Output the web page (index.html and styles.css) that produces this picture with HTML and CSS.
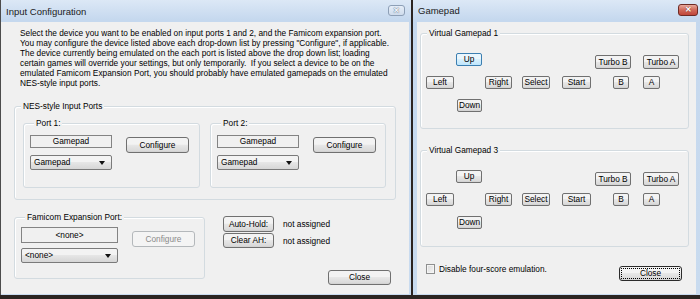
FILE: index.html
```
<!DOCTYPE html>
<html lang="en">
<head>
  <meta charset="UTF-8" />
  <title>Input Configuration</title>
  <link rel="stylesheet" href="styles.css">
</head>
<body>
  <div class="window input-config">
    <div class="titlebar">
      <span class="title">Input Configuration</span>
      <span class="close-btn inactive">&#x2715;</span>
    </div>
    <div class="client config-client">
      <p class="intro">
        Select the device you want to be enabled on input ports 1 and 2, and the Famicom expansion port.<br>
        You may configure the device listed above each drop-down list by pressing "Configure", if applicable.<br>
        The device currently being emulated on the each port is listed above the drop down list; loading<br>
        certain games will override your settings, but only temporarily.&nbsp; If you select a device to be on the<br>
        emulated Famicom Expansion Port, you should probably have emulated gamepads on the emulated<br>
        NES-style input ports.
      </p>

      <div class="group nes-group">
        <span class="group-label">NES-style Input Ports</span>
        <div class="ports">
          <div class="group port port-1">
            <span class="group-label">Port 1:</span>
            <div class="port-body">
              <div class="port-fields">
                <div class="static">Gamepad</div>
                <div class="combo">Gamepad<span class="arrow"></span></div>
              </div>
              <button class="btn configure">Configure</button>
            </div>
          </div>
          <div class="group port port-2">
            <span class="group-label">Port 2:</span>
            <div class="port-body">
              <div class="port-fields">
                <div class="static">Gamepad</div>
                <div class="combo">Gamepad<span class="arrow"></span></div>
              </div>
              <button class="btn configure">Configure</button>
            </div>
          </div>
        </div>
      </div>

      <div class="bottom-row">
        <div class="group fam-group">
          <span class="group-label">Famicom Expansion Port:</span>
          <div class="port-body">
            <div class="port-fields">
              <div class="static wide">&lt;none&gt;</div>
              <div class="combo wide">&lt;none&gt;<span class="arrow"></span></div>
            </div>
            <button class="btn configure" disabled>Configure</button>
          </div>
        </div>
        <div class="hotkeys">
          <div class="hotkey">
            <button class="btn hotkey-btn">Auto-Hold:</button>
            <span class="hotkey-value">not assigned</span>
          </div>
          <div class="hotkey">
            <button class="btn hotkey-btn">Clear AH:</button>
            <span class="hotkey-value">not assigned</span>
          </div>
          <button class="btn close">Close</button>
        </div>
      </div>
    </div>
  </div>

  <div class="window gamepad">
    <div class="titlebar">
      <span class="title">Gamepad</span>
      <span class="close-btn active">&#x2715;</span>
    </div>
    <div class="client pad-client">
      <div class="group pad-group">
        <span class="group-label">Virtual Gamepad 1</span>
        <div class="pad-row row-top">
          <button class="btn pad up focused">Up</button>
          <button class="btn pad turbo-b">Turbo B</button>
          <button class="btn pad turbo-a">Turbo A</button>
        </div>
        <div class="pad-row row-mid">
          <button class="btn pad left">Left</button>
          <button class="btn pad right">Right</button>
          <button class="btn pad select">Select</button>
          <button class="btn pad start">Start</button>
          <button class="btn pad b">B</button>
          <button class="btn pad a">A</button>
        </div>
        <div class="pad-row row-bottom">
          <button class="btn pad down">Down</button>
        </div>
      </div>

      <div class="group pad-group second">
        <span class="group-label">Virtual Gamepad 3</span>
        <div class="pad-row row-top">
          <button class="btn pad up">Up</button>
          <button class="btn pad turbo-b">Turbo B</button>
          <button class="btn pad turbo-a">Turbo A</button>
        </div>
        <div class="pad-row row-mid">
          <button class="btn pad left">Left</button>
          <button class="btn pad right">Right</button>
          <button class="btn pad select">Select</button>
          <button class="btn pad start">Start</button>
          <button class="btn pad b">B</button>
          <button class="btn pad a">A</button>
        </div>
        <div class="pad-row row-bottom">
          <button class="btn pad down">Down</button>
        </div>
      </div>

      <div class="pad-footer">
        <label class="check"><span class="checkbox"></span>Disable four-score emulation.</label>
        <button class="btn close default">Close</button>
      </div>
    </div>
  </div>
</body>
</html>
```

FILE: styles.css
```
* {
  box-sizing: border-box;
}

body {
  margin: 0;
  height: 299px;
  overflow: hidden;
  background-color: #2b2421;
  font-family: "Liberation Sans", Arial, sans-serif;
  font-size: 8.3px;
  color: #000;
  display: flex;
  gap: 2px;
  align-items: flex-start;
}

.window {
  height: 295px;
  display: flex;
  flex-direction: column;
  background: linear-gradient(#dce8f6, #c5d8ee 20px, #c9dbef);
}

.input-config {
  width: 411px;
  border-left: 1px solid #4c4c4c;
  padding: 0 2px 1px 0;
}

.gamepad {
  width: 287px;
}

.titlebar {
  height: 22px;
  flex: none;
  display: flex;
  justify-content: space-between;
  align-items: flex-start;
  padding: 4px 2px 0 5px;
}

.input-config .titlebar {
  padding: 5px 4px 0 5px;
}

.title {
  margin-top: 1px;
  font-size: 9.5px;
  line-height: 12px;
  color: #1b1b1b;
}

.close-btn {
  width: 20px;
  height: 12px;
  border-radius: 3px;
  font-size: 8px;
  line-height: 10px;
  text-align: center;
  font-weight: bold;
}

.close-btn.inactive {
  width: 17px;
  height: 11px;
  line-height: 9px;
  border: 1px solid #8d9fb6;
  background: linear-gradient(#e6eef8, #cfdcec);
  color: #f4f7fb;
  text-shadow: 0 0 1px #60708a, 0 0 1px #60708a;
}

.close-btn.active {
  border: 1px solid #6e2b25;
  background: linear-gradient(#e9a99c, #d0695a 50%, #c0463a);
  color: #fff;
  text-shadow: 0 0 1px #5a1a14;
}

.client {
  flex: 1;
  background-color: #f0f0f0;
}

.config-client {
  padding: 6px 0 0 13px;
}

.intro {
  margin: 0 0 0 6px;
  line-height: 10px;
  white-space: nowrap;
}

/* group boxes */
.group {
  border: 1px solid #d3dbe0;
  border-radius: 3px;
  box-shadow: inset 1px 1px 0 #fff;
}

.group-label {
  display: block;
  width: max-content;
  margin: -6px 0 0 5px;
  padding: 0 2px;
  line-height: 10px;
  background-color: #f0f0f0;
}

.nes-group {
  width: 382px;
  height: 94px;
  margin-top: 18px;
  padding: 0 8px;
}

.nes-group > .group-label {
  margin-left: -2px;
}

.ports {
  display: flex;
  gap: 10px;
  margin-top: 12px;
}

.port {
  height: 65px;
  padding: 0 5px;
}

.port-1 {
  width: 177px;
}

.port-2 {
  width: 176px;
}

.port-body {
  display: flex;
  align-items: flex-start;
  margin-top: 7px;
  padding-left: 1px;
}

.port-fields {
  display: flex;
  flex-direction: column;
  gap: 7px;
}

.static {
  width: 82px;
  height: 13px;
  border: 1px solid #838383;
  line-height: 11px;
  text-align: center;
}

.combo {
  position: relative;
  width: 82px;
  height: 15px;
  border: 1px solid #7a7a7a;
  border-radius: 2px;
  background: linear-gradient(#f3f3f3 45%, #e6e6e6 50%, #d6d6d6);
  line-height: 13px;
  padding-left: 3px;
}

.arrow {
  position: absolute;
  right: 6px;
  top: 5px;
  border-left: 3px solid transparent;
  border-right: 3px solid transparent;
  border-top: 4px solid #111;
}

/* buttons */
.btn {
  font: inherit;
  color: #000;
  padding: 0;
  border: 1px solid #707070;
  border-radius: 3px;
  background: linear-gradient(#f3f3f3 45%, #e7e7e7 50%, #dadada 90%, #cfcfcf);
  line-height: 13px;
  text-align: center;
}

.btn:disabled {
  border-color: #b4b8bb;
  background: #f4f4f4;
  color: #8a8a8a;
}

.configure {
  width: 63px;
  height: 16px;
  margin: 2px 0 0 14px;
}

/* bottom row of the config window */
.bottom-row {
  display: flex;
  align-items: flex-start;
  margin-top: 16px;
}

.fam-group {
  width: 191px;
  height: 62px;
  margin-top: 1px;
  padding: 0 5px;
}

.fam-group .port-body {
  margin-top: 5px;
}

.fam-group .port-fields {
  gap: 5px;
}

.static.wide {
  width: 97px;
  height: 16px;
  line-height: 14px;
}

.combo.wide {
  width: 97px;
}

.fam-group .configure {
  margin-top: 4px;
}

.hotkeys {
  display: flex;
  flex-direction: column;
  margin-left: 18px;
  width: 168px;
}

.hotkey {
  display: flex;
  align-items: center;
  margin-bottom: 1px;
}

.hotkey-btn {
  width: 51px;
  height: 16px;
}

.hotkey + .hotkey .hotkey-btn {
  height: 15px;
}

.hotkey-value {
  margin-left: 9px;
}

.close {
  width: 63px;
  height: 15px;
  line-height: 13px;
}

.hotkeys .close {
  align-self: flex-end;
  margin-top: 21px;
}

/* gamepad window */
.pad-client {
  margin: 0 4px 1px 4px;
  padding: 11px 0 0 3px;
}

.pad-group {
  width: 269px;
  height: 96px;
  padding-left: 5px;
}

.pad-group.second {
  margin-top: 21px;
  height: 97px;
}

.pad-group .group-label {
  margin-left: 1px;
}

.pad-row {
  display: flex;
  align-items: flex-start;
}

.pad {
  height: 13px;
  line-height: 11px;
  border-radius: 2px;
}

.row-top {
  margin-top: 15px;
}

.row-mid {
  margin-top: 7px;
}

.row-bottom {
  margin-top: 10px;
}

.up { width: 26px; margin-left: 30px; }
.turbo-b { width: 36px; height: 14px; margin: 2px 0 0 113px; }
.turbo-a { width: 36px; height: 14px; margin: 2px 0 0 12px; }
.left { width: 28px; }
.right { width: 27px; margin-left: 31px; }
.select { width: 28px; margin-left: 10px; }
.start { width: 29px; margin-left: 12px; }
.b { width: 16px; margin-left: 22px; }
.a { width: 17px; margin-left: 14px; }
.down { width: 25px; margin-left: 31px; }

.focused {
  border-color: #3c7fb1;
  background: linear-gradient(#eaf6fd 45%, #d9f0fc 50%, #bee6fd);
}

.pad-footer {
  display: flex;
  align-items: flex-start;
  margin-top: 17px;
  padding-left: 6px;
}

.check {
  display: flex;
  align-items: center;
  line-height: 10px;
}

.checkbox {
  width: 9px;
  height: 10px;
  margin-right: 4px;
  border: 1px solid #8e8f8f;
  background: linear-gradient(135deg, #d9d9d9, #f6f6f6);
  box-shadow: inset 0 0 0 1px #f4f4f4;
}

.pad-footer .close {
  margin: 2px 14px 0 auto;
}

.close.default {
  border-color: #2b2b2b;
  outline: 1px dotted #000;
  outline-offset: -3px;
}
```
